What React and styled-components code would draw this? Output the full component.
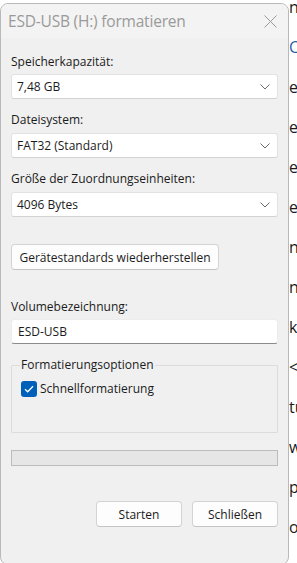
import React from "react";
import styled, { createGlobalStyle } from "styled-components";

const GlobalStyle = createGlobalStyle`
  html, body {
    margin: 0;
    padding: 0;
    background: #ffffff;
    font-family: "Open Sans", "Noto Sans", "Liberation Sans", sans-serif;
  }
`;

const Page = styled.div`
  display: flex;
  align-items: flex-start;
  width: 297px;
  height: 563px;
  overflow: hidden;
`;

const Dialog = styled.div`
  flex-shrink: 0;
  width: 289px;
  height: 562px;
  margin-top: 3px;
  box-sizing: border-box;
  border: 1px solid #b9b9b9;
  border-radius: 8px;
  background: #f0f0f0;
  overflow: hidden;
  display: flex;
  flex-direction: column;
`;

const TitleBar = styled.div`
  height: 34px;
  flex-shrink: 0;
  background: #f3f3f3;
  display: flex;
  align-items: center;
  justify-content: space-between;
  padding: 0 11px 0 7px;
  color: #9a9a9a;
  font-size: 15.5px;
  letter-spacing: -0.2px;
`;

const Body = styled.div`
  display: flex;
  flex-direction: column;
  padding: 0 10px;
`;

const Label = styled.div`
  margin-top: ${(p) => p.$mt}px;
  font-size: 12px;
  line-height: 16px;
  color: #1b1b1b;
`;

const Select = styled.div`
  margin-top: ${(p) => p.$mt || 4}px;
  height: 25px;
  box-sizing: border-box;
  background: #ffffff;
  border: 1px solid #e2e2e2;
  border-bottom-color: #d2d2d2;
  border-radius: 3px;
  display: flex;
  align-items: center;
  justify-content: space-between;
  padding: 0 7px 0 5px;
  font-size: 12px;
  color: #1b1b1b;
`;

const Input = styled.div`
  margin-top: 4px;
  height: 25px;
  box-sizing: border-box;
  background: #ffffff;
  border: 1px solid #ececec;
  border-bottom: 1px solid #8a8a8a;
  border-radius: 3px;
  display: flex;
  align-items: center;
  padding: 0 6px;
  font-size: 12px;
  color: #1b1b1b;
`;

const Button = styled.div`
  margin-top: ${(p) => p.$mt || 0}px;
  height: 26px;
  box-sizing: border-box;
  width: ${(p) => p.$w}px;
  align-self: ${(p) => p.$align || "auto"};
  background: #fdfdfd;
  border: 1px solid #d3d3d3;
  border-bottom-color: #c4c4c4;
  border-radius: 4px;
  display: flex;
  align-items: center;
  justify-content: center;
  font-size: 12px;
  color: #1b1b1b;
`;

const Group = styled.fieldset`
  margin: 13px 0 0;
  padding: 7px 9px 0;
  border: 1px solid #dcdcdc;
  border-radius: 1px;
  box-sizing: border-box;
  height: 76px;
`;

const Legend = styled.legend`
  padding: 0 1px;
  margin-left: -1px;
  font-size: 12px;
  line-height: 16px;
  color: #1b1b1b;
`;

const CheckRow = styled.div`
  display: flex;
  align-items: center;
  gap: 3px;
  font-size: 12px;
  color: #1b1b1b;
`;

const Box = styled.div`
  width: 16px;
  height: 16px;
  border-radius: 3px;
  background: #005fb8;
  display: flex;
  align-items: center;
  justify-content: center;
`;

const Progress = styled.div`
  margin-top: 17px;
  height: 16px;
  box-sizing: border-box;
  background: #e6e6e6;
  border: 1px solid #bcbcbc;
`;

const Footer = styled.div`
  margin-top: 35px;
  display: flex;
  justify-content: flex-end;
  gap: 10px;
`;

const Behind = styled.div`
  flex: 1;
  overflow: hidden;
  margin-top: -13px;
  display: flex;
  flex-direction: column;
  font-family: "Open Sans", "Noto Sans", sans-serif;
  font-size: 16px;
  line-height: 40px;
  color: #1b1b1b;
  white-space: nowrap;
`;

const BehindWord = styled.div`
  color: ${(p) => (p.$blue ? "#2a5fa8" : "#1b1b1b")};
`;

const Chevron = () => (
  <svg width="10" height="6" viewBox="0 0 10 6">
    <polyline points="0.5,0.5 5,5 9.5,0.5" fill="none" stroke="#6a6a6a" strokeWidth="1" />
  </svg>
);

const CloseIcon = () => (
  <svg width="13" height="13" viewBox="0 0 13 13">
    <path d="M0.5 0.5 L12.5 12.5 M12.5 0.5 L0.5 12.5" stroke="#9a9a9a" strokeWidth="1" />
  </svg>
);

const Check = () => (
  <svg width="10" height="8" viewBox="0 0 10 8">
    <polyline points="1,4.2 3.7,6.8 9,1.2" fill="none" stroke="#ffffff" strokeWidth="1.3" />
  </svg>
);

const behindWords = [
  ["n", false],
  ["C", true],
  ["e", false],
  ["e", false],
  ["e", false],
  ["e", false],
  ["ns", false],
  ["ns", false],
  ["k", false],
  ["<", false],
  ["tu", false],
  ["w", false],
  ["p", false],
  ["o", false],
];

export default function App() {
  return (
    <Page>
      <GlobalStyle />
      <Dialog>
        <TitleBar>
          <span>ESD-USB (H:) formatieren</span>
          <CloseIcon />
        </TitleBar>
        <Body>
          <Label $mt={16}>Speicherkapazität:</Label>
          <Select>
            <span>7,48 GB</span>
            <Chevron />
          </Select>
          <Label $mt={13}>Dateisystem:</Label>
          <Select $mt={5}>
            <span>FAT32 (Standard)</span>
            <Chevron />
          </Select>
          <Label $mt={13}>Größe der Zuordnungseinheiten:</Label>
          <Select $mt={5}>
            <span>4096 Bytes</span>
            <Chevron />
          </Select>
          <Button $mt={27} $w={208} $align="flex-start">
            Gerätestandards wiederherstellen
          </Button>
          <Label $mt={29}>Volumebezeichnung:</Label>
          <Input>ESD-USB</Input>
          <Group>
            <Legend>Formatierungsoptionen</Legend>
            <CheckRow>
              <Box>
                <Check />
              </Box>
              <span>Schnellformatierung</span>
            </CheckRow>
          </Group>
          <Progress />
          <Footer>
            <Button $w={86}>Starten</Button>
            <Button $w={86}>Schließen</Button>
          </Footer>
        </Body>
      </Dialog>
      <Behind>
        {behindWords.map(([w, blue], i) => (
          <BehindWord key={i} $blue={blue}>
            {w}
          </BehindWord>
        ))}
      </Behind>
    </Page>
  );
}
